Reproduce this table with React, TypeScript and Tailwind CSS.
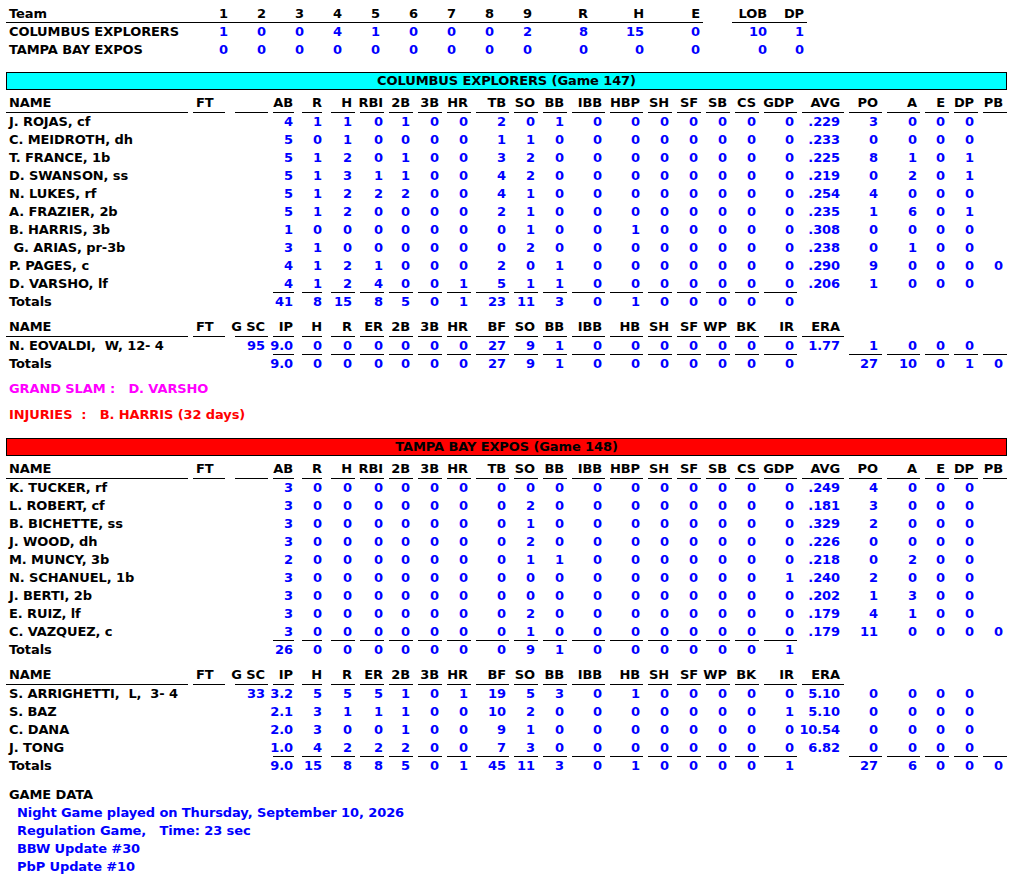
import clsx from "clsx";

// column boxes for the box score rows (name, FT, G SC, AB/IP ... PB)
const COLS = [
  "w-[182px] justify-start pl-[3px]",
  "ml-[5px] w-[32px] justify-start pl-[3px]",
  "ml-[10px] w-[33px] justify-end pr-[3px]",
  "ml-[5px] w-[21px] justify-end pr-[1px]",
  "ml-[8px] w-[20px] justify-end",
  "ml-[9px] w-[24px] justify-end pr-[3px]",
  "ml-[5px] w-[24px] justify-end pr-[1px]",
  "ml-[5px] w-[24px] justify-end pr-[3px]",
  "ml-[5px] w-[24px] justify-end pr-[3px]",
  "ml-[5px] w-[24px] justify-end pr-[3px]",
  "ml-[5px] w-[33px] justify-end pr-[3px]",
  "ml-[5px] w-[24px] justify-end pr-[3px]",
  "ml-[5px] w-[24px] justify-end pr-[3px]",
  "ml-[5px] w-[33px] justify-end pr-[3px]",
  "ml-[5px] w-[33px] justify-end pr-[3px]",
  "ml-[5px] w-[24px] justify-end pr-[3px]",
  "ml-[5px] w-[24px] justify-end pr-[3px]",
  "ml-[5px] w-[24px] justify-end pr-[3px]",
  "ml-[5px] w-[24px] justify-end pr-[3px]",
  "ml-[5px] w-[33px] justify-end pr-[3px]",
  "ml-[5px] w-[42px] justify-end pr-[4px]",
  "ml-[5px] w-[33px] justify-end pr-[4px]",
  "ml-[5px] w-[33px] justify-end pr-[3px]",
  "ml-[5px] w-[24px] justify-end pr-[4px]",
  "ml-[5px] w-[24px] justify-end pr-[4px]",
  "ml-[5px] w-[24px] justify-end pr-[4px]",
];

const LINE_COLS = [
  "w-[184px] justify-start pl-[3px]",
  "w-[38px] justify-end",
  "w-[38px] justify-end",
  "w-[38px] justify-end",
  "w-[38px] justify-end",
  "w-[38px] justify-end",
  "w-[38px] justify-end",
  "w-[38px] justify-end",
  "w-[38px] justify-end",
  "w-[38px] justify-end",
  "w-[56px] justify-end",
  "w-[56px] justify-end",
  "w-[59px] justify-end pr-[3px]",
  "ml-[29px] w-[38px] justify-end pr-[3px]",
  "w-[37px] justify-end pr-[3px]",
];

const BAT_HEAD = ["NAME", "FT", "", "AB", "R", "H", "RBI", "2B", "3B", "HR", "TB", "SO", "BB", "IBB", "HBP", "SH", "SF", "SB", "CS", "GDP", "AVG", "PO", "A", "E", "DP", "PB"];
const PIT_HEAD = ["NAME", "FT", "G SC", "IP", "H", "R", "ER", "2B", "3B", "HR", "BF", "SO", "BB", "IBB", "HB", "SH", "SF", "WP", "BK", "IR", "ERA"];

const range = (a: number, b: number) => Array.from({ length: b - a + 1 }, (_, i) => a + i);
const BAT_LAST = range(3, 19);
const PIT_LAST = [...range(3, 19), ...range(21, 25)];

type Line = [string, string];
type PLine = [string, string, string];

const teams = [
  {
    title: "COLUMBUS EXPLORERS (Game 147)",
    bar: "bg-[#00ffff]",
    batters: [
      ["J. ROJAS, cf", "4 1 1 0 1 0 0 2 0 1 0 0 0 0 0 0 0 .229 3 0 0 0"],
      ["C. MEIDROTH, dh", "5 0 1 0 0 0 0 1 1 0 0 0 0 0 0 0 0 .233 0 0 0 0"],
      ["T. FRANCE, 1b", "5 1 2 0 1 0 0 3 2 0 0 0 0 0 0 0 0 .225 8 1 0 1"],
      ["D. SWANSON, ss", "5 1 3 1 1 0 0 4 2 0 0 0 0 0 0 0 0 .219 0 2 0 1"],
      ["N. LUKES, rf", "5 1 2 2 2 0 0 4 1 0 0 0 0 0 0 0 0 .254 4 0 0 0"],
      ["A. FRAZIER, 2b", "5 1 2 0 0 0 0 2 1 0 0 0 0 0 0 0 0 .235 1 6 0 1"],
      ["B. HARRIS, 3b", "1 0 0 0 0 0 0 0 1 0 0 1 0 0 0 0 0 .308 0 0 0 0"],
      [" G. ARIAS, pr-3b", "3 1 0 0 0 0 0 0 2 0 0 0 0 0 0 0 0 .238 0 1 0 0"],
      ["P. PAGES, c", "4 1 2 1 0 0 0 2 0 1 0 0 0 0 0 0 0 .290 9 0 0 0 0"],
      ["D. VARSHO, lf", "4 1 2 4 0 0 1 5 1 1 0 0 0 0 0 0 0 .206 1 0 0 0"],
    ] as Line[],
    batTotals: "41 8 15 8 5 0 1 23 11 3 0 1 0 0 0 0 0",
    pitchers: [["N. EOVALDI,  W, 12- 4", "95", "9.0 0 0 0 0 0 0 27 9 1 0 0 0 0 0 0 0 1.77 1 0 0 0"]] as PLine[],
    pitTotals: "9.0 0 0 0 0 0 0 27 9 1 0 0 0 0 0 0 0 _ 27 10 0 1 0",
  },
  {
    title: "TAMPA BAY EXPOS (Game 148)",
    bar: "bg-[#ff0000]",
    batters: [
      ["K. TUCKER, rf", "3 0 0 0 0 0 0 0 0 0 0 0 0 0 0 0 0 .249 4 0 0 0"],
      ["L. ROBERT, cf", "3 0 0 0 0 0 0 0 2 0 0 0 0 0 0 0 0 .181 3 0 0 0"],
      ["B. BICHETTE, ss", "3 0 0 0 0 0 0 0 1 0 0 0 0 0 0 0 0 .329 2 0 0 0"],
      ["J. WOOD, dh", "3 0 0 0 0 0 0 0 2 0 0 0 0 0 0 0 0 .226 0 0 0 0"],
      ["M. MUNCY, 3b", "2 0 0 0 0 0 0 0 1 1 0 0 0 0 0 0 0 .218 0 2 0 0"],
      ["N. SCHANUEL, 1b", "3 0 0 0 0 0 0 0 0 0 0 0 0 0 0 0 1 .240 2 0 0 0"],
      ["J. BERTI, 2b", "3 0 0 0 0 0 0 0 0 0 0 0 0 0 0 0 0 .202 1 3 0 0"],
      ["E. RUIZ, lf", "3 0 0 0 0 0 0 0 2 0 0 0 0 0 0 0 0 .179 4 1 0 0"],
      ["C. VAZQUEZ, c", "3 0 0 0 0 0 0 0 1 0 0 0 0 0 0 0 0 .179 11 0 0 0 0"],
    ] as Line[],
    batTotals: "26 0 0 0 0 0 0 0 9 1 0 0 0 0 0 0 1",
    pitchers: [
      ["S. ARRIGHETTI,  L,  3- 4", "33", "3.2 5 5 5 1 0 1 19 5 3 0 1 0 0 0 0 0 5.10 0 0 0 0"],
      ["S. BAZ", "", "2.1 3 1 1 1 0 0 10 2 0 0 0 0 0 0 0 1 5.10 0 0 0 0"],
      ["C. DANA", "", "2.0 3 0 0 1 0 0 9 1 0 0 0 0 0 0 0 0 10.54 0 0 0 0"],
      ["J. TONG", "", "1.0 4 2 2 2 0 0 7 3 0 0 0 0 0 0 0 0 6.82 0 0 0 0"],
    ] as PLine[],
    pitTotals: "9.0 15 8 8 5 0 1 45 11 3 0 1 0 0 0 0 1 _ 27 6 0 0 0",
  },
];

const stats = (s: string) => s.split(" ").map((v) => (v === "_" ? "" : v));

function Row({ cells, under = [], head = false }: { cells: string[]; under?: number[]; head?: boolean }) {
  return (
    <div className="flex">
      {COLS.map((c, i) => (
        <div
          key={i}
          className={clsx(
            "flex shrink-0 items-center whitespace-pre",
            c,
            head ? "h-[19px]" : "h-[18px]",
            under.includes(i) && "border-b border-black",
            head || i === 0 ? "text-black" : "text-[#0000ff]"
          )}
        >
          {cells[i] ?? ""}
        </div>
      ))}
    </div>
  );
}

function LineRow({ cells, head = false }: { cells: string[]; head?: boolean }) {
  return (
    <div className="flex h-[18px]">
      {LINE_COLS.map((c, i) => (
        <div
          key={i}
          className={clsx(
            "flex shrink-0 items-center",
            c,
            head && "border-b border-black",
            head || i === 0 ? "text-black" : "text-[#0000ff]"
          )}
        >
          {cells[i]}
        </div>
      ))}
    </div>
  );
}

function TeamBox({ team, first }: { team: (typeof teams)[number]; first: boolean }) {
  const lastBat = team.batters.length - 1;
  const lastPit = team.pitchers.length - 1;
  return (
    <div>
      <div
        className={clsx(
          "flex h-[18px] w-[1001px] items-center justify-center border border-black text-black",
          team.bar,
          first ? "mt-[13px]" : "mt-[14px]"
        )}
      >
        {team.title}
      </div>

      <div className="mt-[4px]">
        <Row head cells={BAT_HEAD} under={range(0, 25)} />
        {team.batters.map(([name, s], i) => (
          <Row key={name} cells={[name, "", "", ...stats(s)]} under={i === lastBat ? BAT_LAST : []} />
        ))}
        <Row cells={["Totals", "", "", ...stats(team.batTotals)]} />
      </div>

      <div className="mt-[7px]">
        <Row head cells={PIT_HEAD} under={range(0, 20)} />
        {team.pitchers.map(([name, gsc, s], i) => (
          <Row key={name} cells={[name, "", gsc, ...stats(s)]} under={i === lastPit ? PIT_LAST : []} />
        ))}
        <Row cells={["Totals", "", "", ...stats(team.pitTotals)]} />
      </div>
    </div>
  );
}

export default function App() {
  return (
    <div className="min-h-screen w-[1016px] bg-white pl-[6px] pt-[5px] font-['DejaVu_Sans',Verdana,sans-serif] text-[13px] font-bold leading-[18px] tracking-[-0.1px]">
      {/* line score */}
      <div>
        <LineRow head cells={["Team", "1", "2", "3", "4", "5", "6", "7", "8", "9", "R", "H", "E", "LOB", "DP"]} />
        <LineRow cells={["COLUMBUS EXPLORERS", "1", "0", "0", "4", "1", "0", "0", "0", "2", "8", "15", "0", "10", "1"]} />
        <LineRow cells={["TAMPA BAY EXPOS", "0", "0", "0", "0", "0", "0", "0", "0", "0", "0", "0", "0", "0", "0"]} />
      </div>

      <TeamBox team={teams[0]} first />

      <div className="mt-[7px] whitespace-pre pl-[3px] text-[#ff00ff]">GRAND SLAM :   D. VARSHO</div>
      <div className="mt-[8px] whitespace-pre pl-[3px] text-[#ff0000]">INJURIES  :   B. HARRIS (32 days)</div>

      <TeamBox team={teams[1]} first={false} />

      {/* game data */}
      <div className="mt-[11px] pl-[3px]">
        <div className="text-black">GAME DATA</div>
        <div className="whitespace-pre pl-[8px] text-[#0000ff]">
          <div>Night Game played on Thursday, September 10, 2026</div>
          <div>Regulation Game,   Time: 23 sec</div>
          <div>BBW Update #30</div>
          <div>PbP Update #10</div>
        </div>
      </div>
    </div>
  );
}
